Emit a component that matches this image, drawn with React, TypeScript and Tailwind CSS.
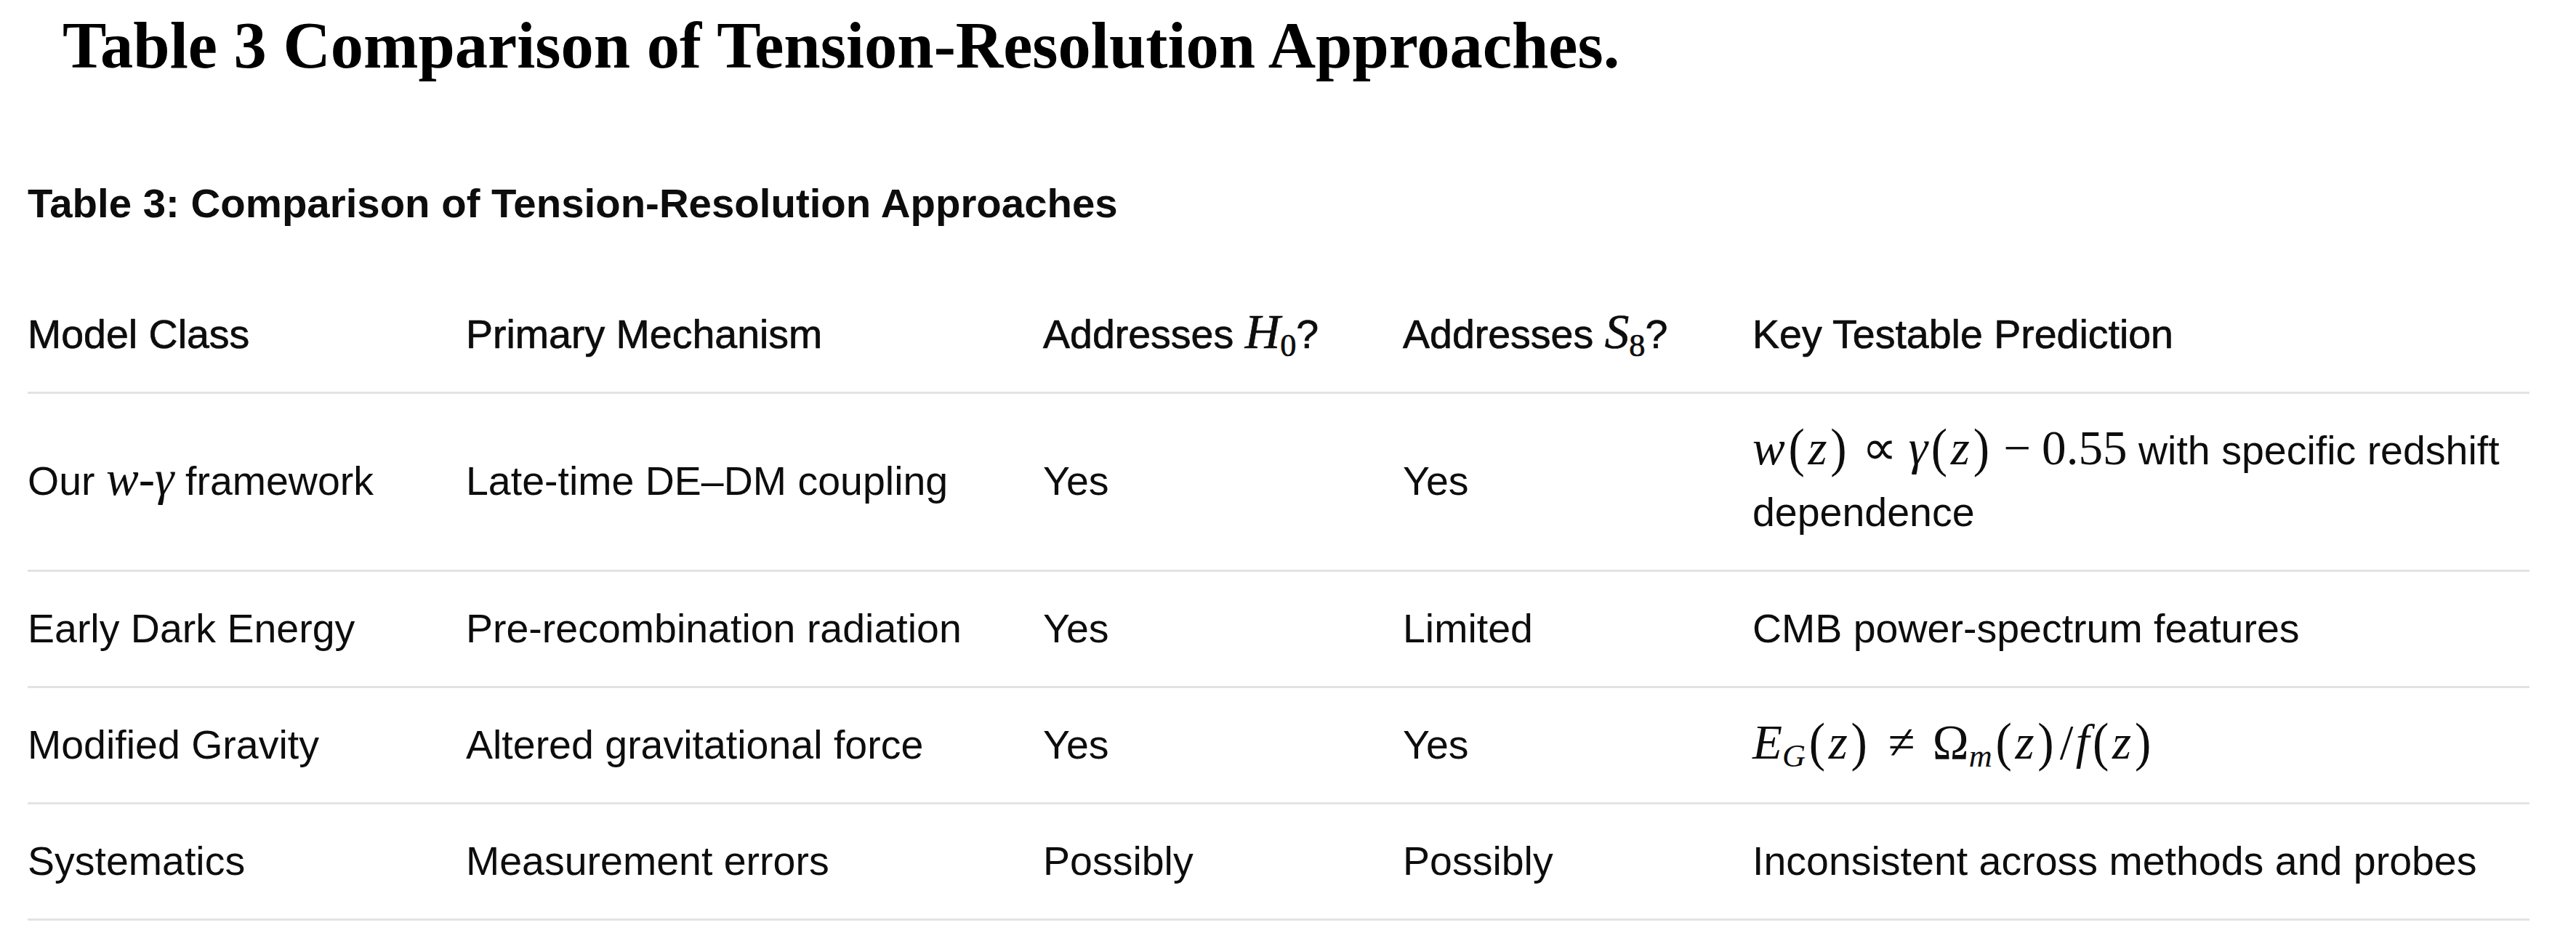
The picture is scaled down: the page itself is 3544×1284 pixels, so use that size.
import React from "react";

const mathFont = "font-['Liberation_Serif',serif]";

function M({ children }: { children: React.ReactNode }) {
  return <span className={`${mathFont} text-[1.21em] leading-none whitespace-nowrap`}>{children}</span>;
}

function I({ children }: { children: React.ReactNode }) {
  return <i className="italic">{children}</i>;
}

function Sub({ children, italic }: { children: React.ReactNode; italic?: boolean }) {
  return <sub className={`text-[0.66em] ${italic ? "italic" : ""}`}>{children}</sub>;
}

// \left( ... \right) style parens, a bit taller and spaced out
function P({ children }: { children: React.ReactNode }) {
  return (
    <>
      <span className="mx-[0.07em] inline-block scale-y-110">(</span>
      {children}
      <span className="mx-[0.07em] inline-block scale-y-110">)</span>
    </>
  );
}

interface Row {
  model: React.ReactNode;
  mechanism: string;
  h0: string;
  s8: string;
  prediction: React.ReactNode;
}

const rows: Row[] = [
  {
    model: (
      <>
        Our{" "}
        <M>
          <I>w</I>-<I>γ</I>
        </M>{" "}
        framework
      </>
    ),
    mechanism: "Late-time DE–DM coupling",
    h0: "Yes",
    s8: "Yes",
    prediction: (
      <>
        <M>
          <I>w</I>
          <P>
            <I>z</I>
          </P>
          <span className="mx-[0.24em]">∝</span>
          <I>γ</I>
          <P>
            <I>z</I>
          </P>
          <span className="mx-[0.22em]">−</span>0.55
        </M>{" "}
        with specific redshift dependence
      </>
    ),
  },
  {
    model: "Early Dark Energy",
    mechanism: "Pre-recombination radiation",
    h0: "Yes",
    s8: "Limited",
    prediction: "CMB power-spectrum features",
  },
  {
    model: "Modified Gravity",
    mechanism: "Altered gravitational force",
    h0: "Yes",
    s8: "Yes",
    prediction: (
      <M>
        <I>E</I>
        <Sub italic>G</Sub>
        <P>
          <I>z</I>
        </P>
        <span className="mx-[0.36em]">≠</span>Ω<Sub italic>m</Sub>
        <P>
          <I>z</I>
        </P>
        <span className="mx-[0.05em]">/</span>
        <I>f</I>
        <P>
          <I>z</I>
        </P>
      </M>
    ),
  },
  {
    model: "Systematics",
    mechanism: "Measurement errors",
    h0: "Possibly",
    s8: "Possibly",
    prediction: "Inconsistent across methods and probes",
  },
];

const gridCols = "grid grid-cols-[603px_794px_495px_481px_1069px]";

export default function App() {
  return (
    <div className="min-h-[1284px] w-[3544px] bg-white text-[#0d0d0d]">
      <h1 className="pt-[18px] pl-[86px] font-['Liberation_Serif',serif] text-[90.5px] font-bold leading-none text-black">
        Table 3 Comparison of Tension-Resolution Approaches.
      </h1>

      <section className="mt-[143px] px-[38px] font-['Liberation_Sans',Arial,sans-serif]">
        <h2 className="text-[56.4px] font-bold leading-none">Table 3: Comparison of Tension-Resolution Approaches</h2>

        <div className="mt-[74px] w-[3442px] text-[55.5px] leading-[85px]">
          <div className={`${gridCols} border-b-[3px] border-[#e3e3e3] py-[36px] [-webkit-text-stroke:0.7px_#0d0d0d]`}>
            <div>Model Class</div>
            <div>Primary Mechanism</div>
            <div>
              Addresses{" "}
              <M>
                <I>H</I>
                <Sub>0</Sub>
              </M>
              ?
            </div>
            <div>
              Addresses{" "}
              <M>
                <I>S</I>
                <Sub>8</Sub>
              </M>
              ?
            </div>
            <div>Key Testable Prediction</div>
          </div>

          {rows.map((row, index) => (
            <div key={index} className={`${gridCols} items-center border-b-[3px] border-[#e3e3e3] py-[36px]`}>
              <div>{row.model}</div>
              <div>{row.mechanism}</div>
              <div>{row.h0}</div>
              <div>{row.s8}</div>
              <div>{row.prediction}</div>
            </div>
          ))}
        </div>
      </section>
    </div>
  );
}
